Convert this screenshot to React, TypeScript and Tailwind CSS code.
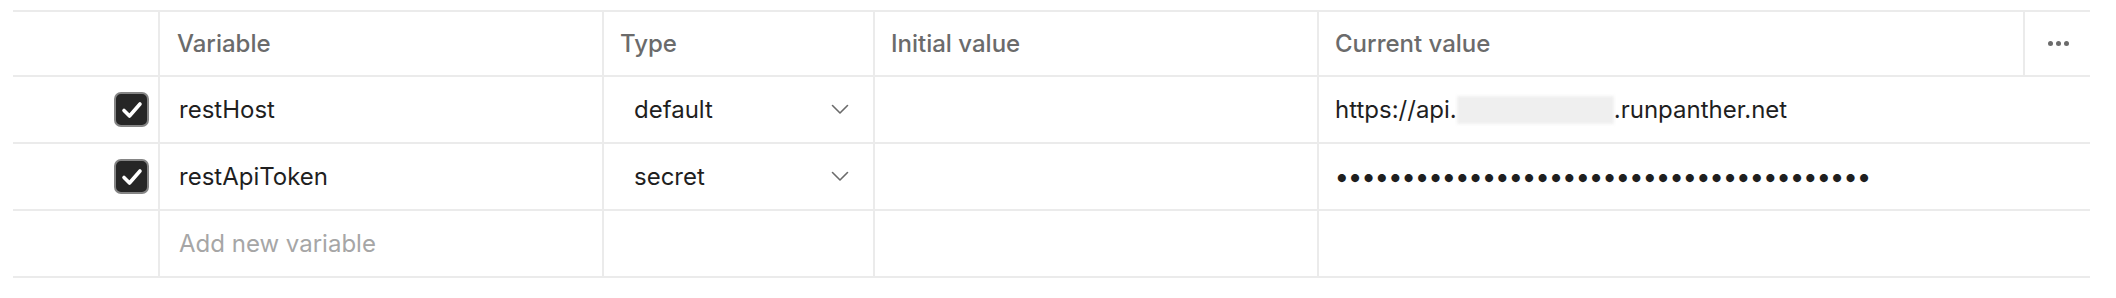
import React from "react";

const font = { fontFamily: "Inter, 'Noto Sans', sans-serif" };

function Check() {
  return (
    <div className="w-[35px] h-[35px] rounded-[7px] border-2 border-[#858585] bg-[#262626] flex items-center justify-center">
      <svg width="26" height="26" viewBox="0 0 26 26" fill="none">
        <path d="M5 13.5 L10.5 19 L21 7" stroke="white" strokeWidth="3.6" strokeLinecap="round" strokeLinejoin="round" />
      </svg>
    </div>
  );
}

function Chevron() {
  return (
    <svg width="18" height="11" viewBox="0 0 18 11" fill="none">
      <path d="M1.5 1.5 L9 9 L16.5 1.5" stroke="#6b6b6b" strokeWidth="1.6" strokeLinecap="round" strokeLinejoin="round" />
    </svg>
  );
}

function TypeSelect({ value }: { value: string }) {
  return (
    <div className="flex items-center w-full pl-[12px] pr-[24px] justify-between">
      <span>{value}</span>
      <Chevron />
    </div>
  );
}

export default function App() {
  const dots = Array.from({ length: 40 });
  return (
    <div className="w-[2116px] h-[298px] bg-white text-[24px] text-[#1f1f1f]" style={font}>
      <div className="pt-[10px] pl-[13px] w-[2090px]">
        {/* header */}
        <div className="flex h-[67px] border-t-2 border-b-2 border-[#ebebeb] text-[#6b6b6b] font-medium">
          <div className="w-[145px]" />
          <div className="w-[444px] border-l-2 border-[#ebebeb] flex items-center pl-[17px]">Variable</div>
          <div className="w-[271px] border-l-2 border-[#ebebeb] flex items-center pl-[16px]">Type</div>
          <div className="w-[444px] border-l-2 border-[#ebebeb] flex items-center pl-[16px]">Initial value</div>
          <div className="w-[706px] border-l-2 border-[#ebebeb] flex items-center pl-[16px]">Current value</div>
          <div className="flex-1 border-l-2 border-[#ebebeb] flex items-center justify-center gap-[3px] pl-[2px]">
            <span className="w-[5px] h-[5px] rounded-full bg-[#6b6b6b]" />
            <span className="w-[5px] h-[5px] rounded-full bg-[#6b6b6b]" />
            <span className="w-[5px] h-[5px] rounded-full bg-[#6b6b6b]" />
          </div>
        </div>
        {/* row 1 */}
        <div className="flex h-[67px] border-b-2 border-[#ebebeb]">
          <div className="w-[145px] flex items-center justify-end pr-[9px]"><Check /></div>
          <div className="w-[444px] border-l-2 border-[#ebebeb] flex items-center pl-[19px]">restHost</div>
          <div className="w-[271px] border-l-2 border-[#ebebeb] flex items-center pl-[18px]"><TypeSelect value="default" /></div>
          <div className="w-[444px] border-l-2 border-[#ebebeb]" />
          <div className="flex-1 border-l-2 border-[#ebebeb] flex items-center pl-[16px]">
            <span>https://api.</span>
            <span className="inline-block w-[157px] h-[28px] bg-[#efefef] blur-[1.5px]" />
            <span>.runpanther.net</span>
          </div>
        </div>
        {/* row 2 */}
        <div className="flex h-[67px] border-b-2 border-[#ebebeb]">
          <div className="w-[145px] flex items-center justify-end pr-[9px]"><Check /></div>
          <div className="w-[444px] border-l-2 border-[#ebebeb] flex items-center pl-[19px]">restApiToken</div>
          <div className="w-[271px] border-l-2 border-[#ebebeb] flex items-center pl-[18px]"><TypeSelect value="secret" /></div>
          <div className="w-[444px] border-l-2 border-[#ebebeb]" />
          <div className="flex-1 border-l-2 border-[#ebebeb] flex items-center pl-[16px]">
            {dots.map((_, i) => (
              <span key={i} className="inline-flex w-[13.4px] justify-center text-[26px] leading-none">•</span>
            ))}
          </div>
        </div>
        {/* row 3 */}
        <div className="flex h-[67px] border-b-2 border-[#ebebeb]">
          <div className="w-[145px]" />
          <div className="w-[444px] border-l-2 border-[#ebebeb] flex items-center pl-[19px] text-[#a6a6a6]">Add new variable</div>
          <div className="w-[271px] border-l-2 border-[#ebebeb]" />
          <div className="w-[444px] border-l-2 border-[#ebebeb]" />
          <div className="flex-1 border-l-2 border-[#ebebeb]" />
        </div>
      </div>
    </div>
  );
}
